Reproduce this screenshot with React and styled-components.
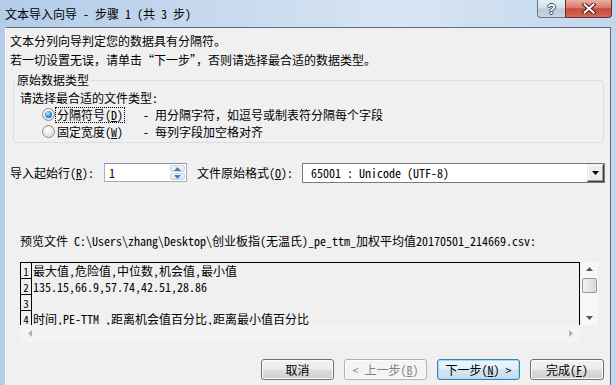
import React from "react";
import styled, { createGlobalStyle } from "styled-components";

const UI_FONT = `"Noto Sans Mono CJK SC", "Noto Sans CJK SC", "Liberation Mono", monospace`;

const GlobalStyle = createGlobalStyle`
  html, body { margin: 0; padding: 0; }
  body { width: 616px; height: 385px; overflow: hidden; background: #f0f0f0; }
  * { box-sizing: border-box; }
`;

const Window = styled.div`
  width: 616px;
  height: 385px;
  display: flex;
  flex-direction: column;
  background: linear-gradient(to right, #b3cce8 0%, #c6d9ee 35%, #d8e5f3 65%, #c2d7ee 100%);
  font-family: ${UI_FONT};
  font-size: 12px;
  color: #000;
  overflow: hidden;
`;

const TitleBar = styled.div`
  height: 27px;
  flex: none;
  display: flex;
  align-items: flex-start;
  padding: 0 4px 0 5px;
`;

const Title = styled.div`
  flex: 1;
  line-height: 27px;
`;

const Controls = styled.div`
  display: flex;
`;

const HelpButton = styled.div`
  width: 28px;
  height: 18px;
  border: 1px solid #65758a;
  border-top: none;
  border-right: none;
  border-radius: 0 0 0 4px;
  background: linear-gradient(#e6eef7 0%, #d2deea 48%, #b7c8da 52%, #c8d6e4 100%);
  display: flex;
  align-items: center;
  justify-content: center;
  color: #fff;
  font-family: "Liberation Sans", sans-serif;
  font-weight: bold;
  font-size: 14px;
  text-shadow: 1px 0 #3b4a5c, -1px 0 #3b4a5c, 0 1px #3b4a5c, 0 -1px #3b4a5c;
`;

const CloseButton = styled.div`
  width: 47px;
  height: 18px;
  border: 1px solid #6b2c28;
  border-top: none;
  border-radius: 0 0 4px 0;
  background: linear-gradient(#eab0a4 0%, #d57a6a 45%, #c44a3d 52%, #d3685a 100%);
  display: flex;
  align-items: center;
  justify-content: center;
`;

const Client = styled.div`
  flex: 1;
  margin: 0 5px;
  background: #f0f0f0;
  border: 1px solid #5d6d80;
  border-left-color: #fbfdff;
  border-bottom: none;
  padding: 3px 5px 0 4px;
  display: flex;
  flex-direction: column;
`;

const Line = styled.div`
  line-height: 19px;
  white-space: nowrap;
`;

const GroupBox = styled.fieldset`
  margin: 3px 1px 0 3px;
  padding: 2px 6px 2px 1px;
  border: 1px solid #d5dfe5;
  border-radius: 3px;
  min-width: 0;
`;

const Legend = styled.legend`
  padding: 0 2px;
  line-height: 16px;
`;

const GroupInner = styled.div`
  padding-left: 5px;
`;

const Prompt = styled.div`
  line-height: 16px;
`;

const RadioRow = styled.div`
  display: grid;
  grid-template-columns: 13px 84px auto;
  column-gap: 2px;
  align-items: center;
  height: 17px;
  margin-left: 22px;
  white-space: nowrap;
`;

const Radio = styled.span`
  width: 13px;
  height: 13px;
  border-radius: 50%;
  border: 1px solid #8e8f8f;
  background: radial-gradient(circle at 40% 35%, #ffffff 0%, #e4e4e4 60%, #cfcfcf 100%);
  display: flex;
  align-items: center;
  justify-content: center;
  &::after {
    content: "";
    display: ${(p) => (p.$checked ? "block" : "none")};
    width: 7px;
    height: 7px;
    border-radius: 50%;
    background: radial-gradient(circle at 40% 35%, #c8f2ff 0%, #3a9be6 45%, #0d4d9e 100%);
  }
`;

const OptionLabel = styled.span`
  justify-self: start;
  line-height: 14px;
  padding: 0 1px;
  margin-left: -1px;
  outline: ${(p) => (p.$focused ? "1px dotted #000" : "none")};
`;

const Key = styled.u`
  text-decoration: underline;
  text-underline-offset: 1px;
`;

const ImportRow = styled.div`
  margin-top: 20px;
  height: 20px;
  display: flex;
  align-items: flex-start;
  white-space: nowrap;
`;

const FieldLabel = styled.span`
  line-height: 19px;
  margin-right: ${(p) => p.$gap}px;
`;

const SpinBox = styled.div`
  width: 83px;
  height: 19px;
  border: 1px solid #abadb3;
  border-top-color: #8c8f94;
  background: #fff;
  display: flex;
  margin-right: 10px;
`;

const SpinValue = styled.div`
  flex: 1;
  padding-left: 4px;
  line-height: 17px;
`;

const SpinButtons = styled.div`
  width: 15px;
  margin: 1px 1px 1px 0;
  display: flex;
  flex-direction: column;
  gap: 1px;
`;

const SpinHalf = styled.div`
  flex: 1;
  border: 1px solid #c9d2dd;
  border-radius: 2px;
  background: linear-gradient(#f2f4f7, #dfe5ec);
  display: flex;
  align-items: center;
  justify-content: center;
`;

const Combo = styled.div`
  flex: 1;
  height: 20px;
  border: 1px solid #7a7a7a;
  background: #fff;
  display: flex;
  align-items: stretch;
`;

const ComboValue = styled.div`
  flex: 1;
  padding-left: 8px;
  line-height: 18px;
`;

const DropButton = styled.div`
  width: 17px;
  border: 1px solid;
  border-color: #e8e8e8 #404040 #404040 #e8e8e8;
  box-shadow: inset -1px -1px #a0a0a0, inset 1px 1px #fff;
  background: #ececec;
  display: flex;
  align-items: center;
  justify-content: center;
`;

const PreviewLabel = styled.div`
  margin-top: 50px;
  padding-left: 10px;
  line-height: 16px;
  white-space: nowrap;
`;

const PreviewArea = styled.div`
  margin: 13px 0 0 10px;
  display: grid;
  grid-template-columns: 560px 17px;
  grid-template-rows: 63px 17px;
  column-gap: 1px;
`;

const DataBox = styled.div`
  border: 1px solid #000;
  border-bottom: none;
  overflow: hidden;
  background: #f0f0f0;
`;

const DataRow = styled.div`
  display: flex;
  height: 16px;
  flex: none;
`;

const NumCell = styled.div`
  width: 11px;
  flex: none;
  border-right: 1px solid #000;
  border-bottom: 1px solid #000;
  display: flex;
  align-items: flex-end;
  justify-content: center;
  font-size: 11px;
  line-height: 13px;
`;

const TextCell = styled.div`
  padding-left: 1px;
  line-height: 16px;
  white-space: nowrap;
`;

const VScroll = styled.div`
  background: #f7f7f7;
  display: flex;
  flex-direction: column;
  align-items: center;
  padding: 5px 0 5px;
`;

const Thumb = styled.div`
  width: 15px;
  height: 15px;
  margin-top: 7px;
  border: 1px solid #979797;
  border-radius: 2px;
  background: linear-gradient(to right, #f3f3f3, #e4e4e4 50%, #d8d8d8);
`;

const Spacer = styled.div`
  flex: 1;
`;

const HScroll = styled.div`
  background: #f4f4f4;
  display: flex;
  align-items: center;
  justify-content: space-between;
  padding: 0 7px 0 8px;
`;

const ButtonRow = styled.div`
  margin-top: 17px;
  display: flex;
  justify-content: flex-end;
  gap: 10px;
  padding-right: 1px;
`;

const Button = styled.div`
  width: ${(p) => p.$w}px;
  height: 21px;
  border: 1px solid ${(p) => (p.$default ? "#3c7fb1" : p.$disabled ? "#adb2b5" : "#707070")};
  border-radius: 3px;
  background: ${(p) =>
    p.$disabled
      ? "#f4f4f4"
      : p.$default
      ? "linear-gradient(#eef6fb 0%, #e2eef7 48%, #d3e4f1 52%, #c9dcec 100%)"
      : "linear-gradient(#f2f2f2 0%, #ebebeb 48%, #dddddd 52%, #cfcfcf 100%)"};
  box-shadow: inset 0 0 0 1px ${(p) => (p.$default ? "#9fdcfa" : "#fcfcfc")};
  color: ${(p) => (p.$disabled ? "#838383" : "#000")};
  display: flex;
  align-items: center;
  justify-content: center;
  line-height: 19px;
  white-space: nowrap;
`;

const Tri = ({ dir, color, w = 7, h = 4 }) => {
  const pts =
    dir === "up"
      ? `0,${h} ${w / 2},0 ${w},${h}`
      : dir === "down"
      ? `0,0 ${w},0 ${w / 2},${h}`
      : dir === "left"
      ? `${h},0 ${h},${w} 0,${w / 2}`
      : `0,0 0,${w} ${h},${w / 2}`;
  const horiz = dir === "left" || dir === "right";
  return (
    <svg width={horiz ? h : w} height={horiz ? w : h} style={{ display: "block" }}>
      <polygon points={pts} fill={color} />
    </svg>
  );
};

const CloseIcon = () => (
  <svg width="14" height="11" viewBox="0 0 14 11" style={{ display: "block" }}>
    <path d="M2.5 1.5 L11.5 9.5 M11.5 1.5 L2.5 9.5" stroke="#4a1c18" strokeWidth="4" strokeLinecap="square" />
    <path d="M2.5 1.5 L11.5 9.5 M11.5 1.5 L2.5 9.5" stroke="#fff" strokeWidth="2" strokeLinecap="square" />
  </svg>
);

const rows = [
  "最大值,危险值,中位数,机会值,最小值",
  "135.15,66.9,57.74,42.51,28.86",
  "",
  "时间,PE-TTM ,距离机会值百分比,距离最小值百分比",
];

export default function App() {
  return (
    <Window lang="zh-CN">
      <GlobalStyle />
      <TitleBar>
        <Title>文本导入向导 - 步骤 1 (共 3 步)</Title>
        <Controls>
          <HelpButton>?</HelpButton>
          <CloseButton>
            <CloseIcon />
          </CloseButton>
        </Controls>
      </TitleBar>
      <Client>
        <Line>文本分列向导判定您的数据具有分隔符。</Line>
        <Line>若一切设置无误，请单击“下一步”，否则请选择最合适的数据类型。</Line>
        <GroupBox>
          <Legend>原始数据类型</Legend>
          <GroupInner>
            <Prompt>请选择最合适的文件类型:</Prompt>
            <RadioRow>
              <Radio $checked />
              <OptionLabel $focused>
                分隔符号(<Key>D</Key>)
              </OptionLabel>
              <span>- 用分隔字符，如逗号或制表符分隔每个字段</span>
            </RadioRow>
            <RadioRow>
              <Radio />
              <OptionLabel>
                固定宽度(<Key>W</Key>)
              </OptionLabel>
              <span>- 每列字段加空格对齐</span>
            </RadioRow>
          </GroupInner>
        </GroupBox>
        <ImportRow>
          <FieldLabel $gap={10}>
            导入起始行(<Key>R</Key>):
          </FieldLabel>
          <SpinBox>
            <SpinValue>1</SpinValue>
            <SpinButtons>
              <SpinHalf>
                <Tri dir="up" color="#3f7fc0" />
              </SpinHalf>
              <SpinHalf>
                <Tri dir="down" color="#3f7fc0" />
              </SpinHalf>
            </SpinButtons>
          </SpinBox>
          <FieldLabel $gap={9}>
            文件原始格式(<Key>O</Key>):
          </FieldLabel>
          <Combo>
            <ComboValue>65001 : Unicode (UTF-8)</ComboValue>
            <DropButton>
              <Tri dir="down" color="#000" />
            </DropButton>
          </Combo>
        </ImportRow>
        <PreviewLabel>预览文件 C:\Users\zhang\Desktop\创业板指(无温氏)_pe_ttm_加权平均值20170501_214669.csv:</PreviewLabel>
        <PreviewArea>
          <DataBox>
            {rows.map((text, i) => (
              <DataRow key={i}>
                <NumCell>{i + 1}</NumCell>
                <TextCell>{text}</TextCell>
              </DataRow>
            ))}
          </DataBox>
          <VScroll>
            <Tri dir="up" color="#555" />
            <Thumb />
            <Spacer />
            <Tri dir="down" color="#555" />
          </VScroll>
          <HScroll>
            <Tri dir="left" color="#b0b0b0" />
            <Tri dir="right" color="#b0b0b0" />
          </HScroll>
        </PreviewArea>
        <ButtonRow>
          <Button $w={73}>取消</Button>
          <Button $w={83} $disabled>
            &lt; 上一步(<Key>B</Key>)
          </Button>
          <Button $w={83} $default>
            下一步(<Key>N</Key>) &gt;
          </Button>
          <Button $w={74}>
            完成(<Key>F</Key>)
          </Button>
        </ButtonRow>
      </Client>
    </Window>
  );
}
